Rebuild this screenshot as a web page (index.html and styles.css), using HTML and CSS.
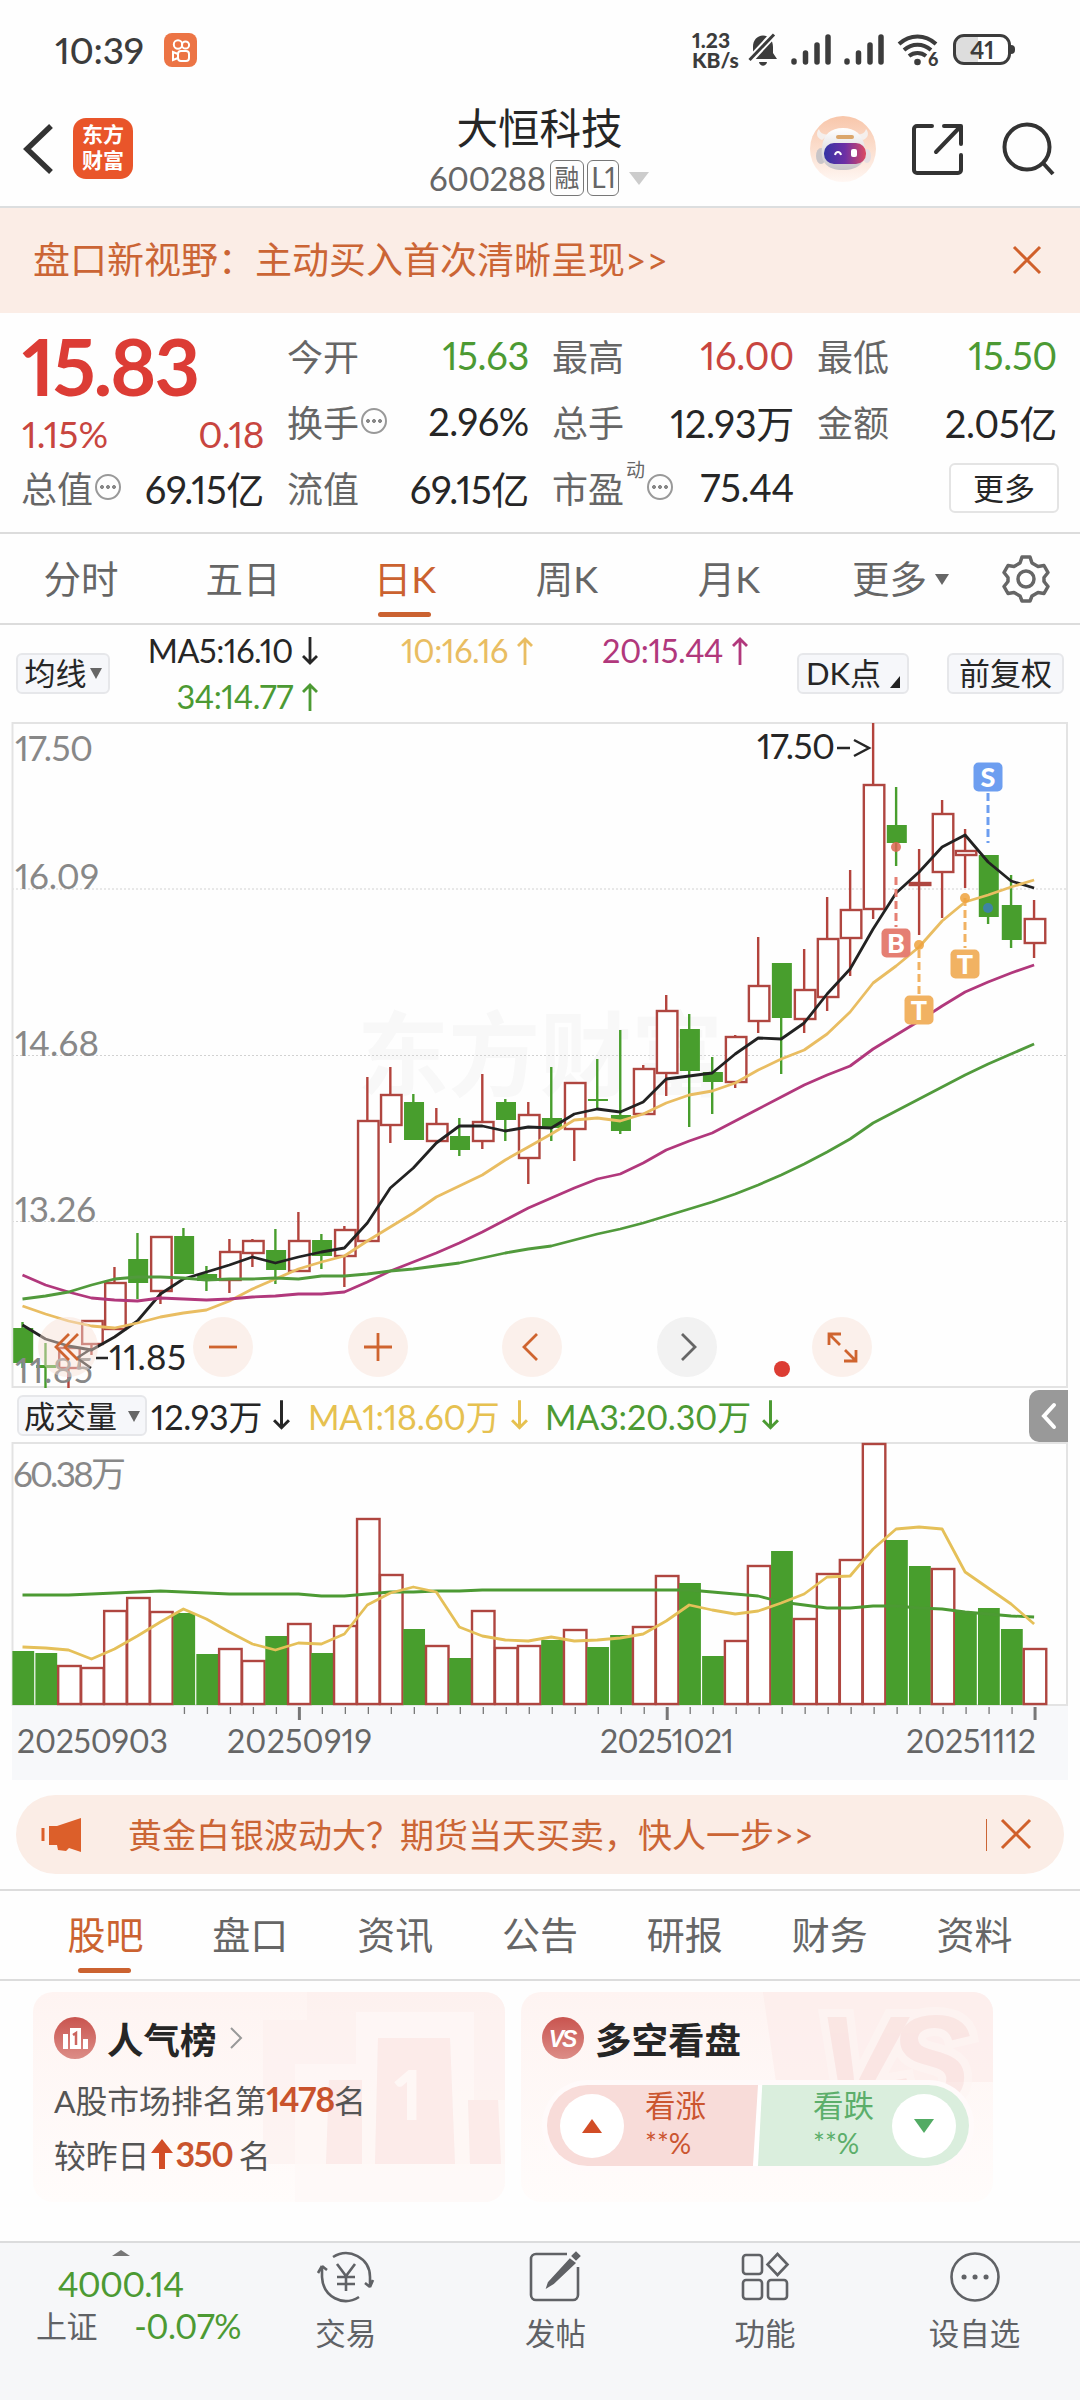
FILE: index.html
```html
<!DOCTYPE html>
<html lang="zh-CN">
<head>
    <meta charset="UTF-8">
    <meta name="viewport" content="width=device-width, initial-scale=1.0">
    <title>大恒科技 600288</title>
    <link rel="stylesheet" href="styles.css">
</head>
<body>
    <div class="status-bar">
        <span class="clock">10:39</span>
        <svg class="app-badge" width="33" height="34" viewBox="0 0 33 34">
            <rect width="33" height="34" rx="8" fill="#ec7445"/>
            <g fill="none" stroke="#fff" stroke-width="2">
                <circle cx="14" cy="11.500" r="4.200"/>
                <circle cx="21.500" cy="12" r="3.600"/>
                <rect x="14" y="18" width="11" height="10" rx="3"/>
                <path d="M14 21l-5-2v8l5-2"/>
            </g>
        </svg>
        <div class="status-right">
            <div class="speed">1.23<br>KB/s</div>
            <svg width="30" height="36" viewBox="0 0 30 36">
                <path d="M5 26V15C5 8 9 4 15 3.500c6 .5 10 4.500 10 11.500v6l4 6H3z" fill="#3c3c3c"/>
                <path d="M11 30h8c-1 5-7 5-8 0z" fill="#3c3c3c"/>
                <path d="M1 29L26 2" stroke="#fff" stroke-width="7"/>
                <path d="M1.500 28L26 2.500" stroke="#3c3c3c" stroke-width="3"/>
            </svg>
            <svg class="signal" width="40" height="36" viewBox="0 0 40 36">
                <path d="M3 29v1M14.500 21v9M26 13v17M37 5v25" stroke="#3c3c3c" stroke-width="5.500" stroke-linecap="round"/>
            </svg>
            <svg class="signal" width="40" height="36" viewBox="0 0 40 36">
                <path d="M3 29v1M14.500 21v9M26 13v17M37 5v25" stroke="#3c3c3c" stroke-width="5.500" stroke-linecap="round"/>
            </svg>
            <svg class="wifi" width="42" height="36" viewBox="0 0 42 36">
                <path d="M2 12c11-10 26-10 37 0M7 18c8-7 19-7 27 0M12 24c5-4 12-4 17 0" fill="none" stroke="#3c3c3c" stroke-width="4"/>
                <circle cx="20.500" cy="30" r="3.300" fill="#3c3c3c"/>
                <text x="31" y="34" class="wifi-gen">6</text>
            </svg>
            <div class="battery"><span>41</span></div>
        </div>
    </div>

    <header class="header">
        <svg class="back" width="30" height="52" viewBox="0 0 30 52">
            <path d="M27 3L3 26l24 23" fill="none" stroke="#333" stroke-width="5.500"/>
        </svg>
        <div class="logo">东方<br>财富</div>
        <div class="stock">
            <div class="stock-name">大恒科技</div>
            <div class="stock-code"><span class="code">600288</span><i>融</i><i class="l1">L1</i><b></b></div>
        </div>
        <div class="header-icons">
            <svg width="66" height="66" viewBox="0 0 66 66">
                <defs>
                    <linearGradient id="avatarBg" x1="0" y1="0" x2="0" y2="1"><stop offset="0" stop-color="#f8c6aa"/><stop offset="1" stop-color="#fff7f3"/></linearGradient>
                    <linearGradient id="visor" x1="0" y1="0" x2="1" y2="0"><stop offset="0" stop-color="#3434a4"/><stop offset=".5" stop-color="#6d2fa5"/><stop offset="1" stop-color="#dc4a62"/></linearGradient>
                    <linearGradient id="helmet" x1="0" y1="0" x2="0" y2="1"><stop offset="0" stop-color="#fff"/><stop offset="1" stop-color="#c8c4c8"/></linearGradient>
                </defs>
                <circle cx="33" cy="33" r="33" fill="url(#avatarBg)"/>
                <path d="M12 24C6 22 6 16 9 13c1 4 4 5 9 6zM53 24c6-2 6-8 3-11-1 4-4 5-9 6z" fill="#f5efec"/>
                <ellipse cx="11" cy="40" rx="5" ry="8" fill="#c9c5c8"/>
                <ellipse cx="57" cy="40" rx="4" ry="7" fill="#e5dee2"/>
                <path d="M12 32C13 18 21 12 33 12s20 6 22 20c2 14-6 22-22 22S10 46 12 32z" fill="url(#helmet)"/>
                <rect x="26" y="19" width="18" height="4" rx="2" fill="#dba66b"/>
                <rect x="14" y="27" width="42" height="21" rx="10" fill="url(#visor)"/>
                <path d="M25 39c1-4 5-4 6 0" fill="none" stroke="#fff" stroke-width="2"/>
                <rect x="41" y="33" width="6" height="8" rx="2" fill="#fff"/>
            </svg>
            <svg class="share" width="52" height="52" viewBox="0 0 52 52">
                <path d="M20 3H5a3 3 0 0 0-3 3v41a3 3 0 0 0 3 3h41a3 3 0 0 0 3-3V32M32 3h17v18M48 4L24 29" fill="none" stroke="#333" stroke-width="4" stroke-linecap="round" stroke-linejoin="round"/>
            </svg>
            <svg class="search" width="54" height="54" viewBox="0 0 54 54">
                <circle cx="25" cy="25" r="22.500" fill="none" stroke="#333" stroke-width="4"/>
                <path d="M41 41l10 11" stroke="#333" stroke-width="4"/>
            </svg>
        </div>
    </header>

    <div class="banner">
        <span>盘口新视野：主动买入首次清晰呈现&gt;&gt;</span>
        <svg width="28" height="28" viewBox="0 0 28 28"><path d="M1 1l26 26M27 1L1 27" stroke="#d0602b" stroke-width="3"/></svg>
    </div>

    <section class="quote">
        <div class="quote-main">
            <div class="price">15.83</div>
            <div class="change"><span>1.15%</span><span>0.18</span></div>
            <div class="item"><label>总值</label><em></em><span>69.15亿</span></div>
        </div>
        <div class="quote-grid">
            <div class="item"><label>今开</label><span class="green">15.63</span></div>
            <div class="item"><label>最高</label><span class="red">16.00</span></div>
            <div class="item"><label>最低</label><span class="green">15.50</span></div>
            <div class="item"><label>换手</label><em></em><span>2.96%</span></div>
            <div class="item"><label>总手</label><span>12.93万</span></div>
            <div class="item"><label>金额</label><span>2.05亿</span></div>
            <div class="item"><label>流值</label><span>69.15亿</span></div>
            <div class="item"><label>市盈<sup>动</sup></label><em></em><span>75.44</span></div>
            <div class="item"><button class="more">更多</button></div>
        </div>
    </section>

    <nav class="period">
        <a>分时</a>
        <a>五日</a>
        <a class="active">日K</a>
        <a>周K</a>
        <a>月K</a>
        <a class="drop">更多<b></b></a>
        <svg width="48" height="48" viewBox="0 0 48 48" fill="none" stroke="#666" stroke-width="3.500" stroke-linejoin="round">
            <path d="M20 2h8l2 6 6 3.500 6-1 4 7-4 5v4l4 5-4 7-6-1-6 3.500-2 5h-8l-2-5-6-3.500-6 1-4-7 4-5v-4l-4-5 4-7 6 1L18 8z"/>
            <circle cx="24" cy="24" r="8"/>
        </svg>
    </nav>

    <section class="legend">
        <button class="chip">均线<b></b></button>
        <div class="ma-list">
            <span>MA5:16.10<svg class="arr" viewBox="0 0 16 28"><path d="M8 0v26M1 19l7 7 7-7"/></svg></span>
            <span class="ma10">10:16.16<svg class="arr" viewBox="0 0 16 28"><path d="M8 28V2M1 9l7-7 7 7"/></svg></span>
            <span class="ma20">20:15.44<svg class="arr" viewBox="0 0 16 28"><path d="M8 28V2M1 9l7-7 7 7"/></svg></span>
            <span class="ma34">34:14.77<svg class="arr" viewBox="0 0 16 28"><path d="M8 28V2M1 9l7-7 7 7"/></svg></span>
        </div>
        <button class="chip dk">DK点<b></b></button>
        <button class="chip fq">前复权</button>
    </section>

    <section class="chart">
        <svg id="priceChart" width="1080" height="666" viewBox="0 0 1080 666"></svg>
        <div class="tools">
            <i><svg viewBox="0 0 60 60"><path d="M31 17L18 30l13 13M40 17L27 30l13 13"/></svg></i>
            <i><svg viewBox="0 0 60 60"><path d="M16 30h28"/></svg></i>
            <i><svg viewBox="0 0 60 60"><path d="M16 30h28M30 16v28"/></svg></i>
            <i><svg viewBox="0 0 60 60"><path d="M35 17L22 30l13 13"/></svg></i>
            <i class="off"><svg viewBox="0 0 60 60"><path d="M25 17l13 13-13 13"/></svg></i>
            <i><svg viewBox="0 0 60 60"><path d="M17 28V17h12M17 17l11 11M33 33l11 11M32 44h12V33"/></svg></i>
        </div>
        <span class="red-dot"></span>
    </section>

    <section class="vol-head">
        <button class="chip">成交量<b></b></button>
        <span class="v0">12.93万<svg class="arr" viewBox="0 0 16 28"><path d="M8 0v26M1 19l7 7 7-7"/></svg></span>
        <span class="v1">MA1:18.60万<svg class="arr" viewBox="0 0 16 28"><path d="M8 0v26M1 19l7 7 7-7"/></svg></span>
        <span class="v3">MA3:20.30万<svg class="arr" viewBox="0 0 16 28"><path d="M8 0v26M1 19l7 7 7-7"/></svg></span>
        <div class="fold"><svg width="16" height="26" viewBox="0 0 16 26"><path d="M13 2L3 13l10 11" fill="none" stroke="#fff" stroke-width="4" stroke-linecap="round"/></svg></div>
    </section>
    <svg id="volumeChart" class="volume" width="1080" height="340" viewBox="0 0 1080 340"></svg>

    <div class="promo">
        <svg width="42" height="36" viewBox="0 0 42 36">
            <path d="M2 11v13" stroke="#dc5f2a" stroke-width="3"/>
            <path d="M8 9h8L40 1v34l-12-4-3 3-8-1-1-5H8z" fill="#dc5f2a"/>
        </svg>
        <span>黄金白银波动大？期货当天买卖，快人一步&gt;&gt;</span>
        <div class="promo-close"><svg width="30" height="30" viewBox="0 0 30 30"><path d="M1 1l28 28M29 1L1 29" stroke="#d0602b" stroke-width="3"/></svg></div>
    </div>

    <nav class="sections">
        <a class="active">股吧</a>
        <a>盘口</a>
        <a>资讯</a>
        <a>公告</a>
        <a>研报</a>
        <a>财务</a>
        <a>资料</a>
    </nav>

    <div class="cards">
        <div class="card">
            <svg class="card-bg" width="472" height="210" viewBox="0 0 472 210">
                <path d="M230 28h44V0h198v172H230z" fill="#fceeec" opacity=".55"/>
                <path d="M262 72h61V20h118v88h31v102H262z" fill="#fef8f6" opacity=".7"/>
                <path d="M296 88h33v84h-36zM345 46h72l5 126h-80zM435 108h30l3 64h-31z" fill="#f9dfdd" opacity=".5"/>
                <text x="361" y="128" class="bg-one">1</text>
            </svg>
            <h3>
                <svg width="42" height="42" viewBox="0 0 42 42">
                    <defs><linearGradient id="badge" x1="0" y1="0" x2="0" y2="1"><stop offset="0" stop-color="#c9544f"/><stop offset="1" stop-color="#dc8d87"/></linearGradient></defs>
                    <circle cx="21" cy="21" r="21" fill="url(#badge)"/>
                    <path d="M9 17h5v15H9zM16 11h11v21H16zM29 22h5v10h-5z" fill="#fff"/>
                    <path d="M19 18l3-2v12" fill="none" stroke="#cc655f" stroke-width="2.500"/>
                </svg>
                人气榜
                <svg class="go" width="14" height="22" viewBox="0 0 14 22"><path d="M2 1l10 10L2 21" fill="none" stroke="#999" stroke-width="2"/></svg>
            </h3>
            <p>A股市场排名第<strong>1478</strong>名</p>
            <p>较昨日<svg class="up" width="22" height="30" viewBox="0 0 22 30"><path d="M11 0l11 14H14v16H8V14H0z" fill="#d24d26"/></svg><strong>350</strong><span class="ming">名</span></p>
        </div>
        <div class="card">
            <svg class="card-bg" width="472" height="210" viewBox="0 0 472 210">
                <path d="M242 0h230v90H255z" fill="#fcebea" opacity=".6"/>
                <text x="296" y="112" class="bg-vs">VS</text>
            </svg>
            <h3>
                <svg width="42" height="42" viewBox="0 0 42 42">
                    <circle cx="21" cy="21" r="21" fill="url(#badge)"/>
                    <text x="20" y="30" class="vs">VS</text>
                </svg>
                多空看盘
            </h3>
            <div class="vote">
                <div class="bull">
                    <i><svg width="22" height="16" viewBox="0 0 22 16"><path d="M11 1l10 14H1z" fill="#d24d26"/></svg></i>
                    <div>看涨<small>**%</small></div>
                </div>
                <div class="bear">
                    <div>看跌<small>**%</small></div>
                    <i><svg width="22" height="16" viewBox="0 0 22 16"><path d="M11 15L1 1h20z" fill="#52ab64"/></svg></i>
                </div>
            </div>
        </div>
    </div>

    <footer class="tabbar">
        <div class="index">
            <b></b>
            <div class="point">4000.14</div>
            <div class="index-row"><span>上证</span><span class="rate">-0.07%</span></div>
        </div>
        <div class="tab">
            <svg viewBox="0 0 56 52">
                <path d="M15 6C31-4 52 7 52 26v10M52 36l3-7M52 36l-5-4M41 46C25 56 5 46 4 26V15M4 15l-4 7M4 15l5 4"/>
                <path d="M19 13l9 12 9-12M28 25v15M19 26h18M19 33h18"/>
            </svg>
            交易
        </div>
        <div class="tab">
            <svg viewBox="0 0 56 52">
                <path d="M40 3H9a5 5 0 0 0-5 5v36a5 5 0 0 0 5 5h37a5 5 0 0 0 5-5V16"/>
                <path d="M22 32L43 9l4 3-21 20-5 3zM46 5l3-3 3 3-3 3z" fill="#606266"/>
            </svg>
            发帖
        </div>
        <div class="tab">
            <svg viewBox="0 0 56 52">
                <rect x="6" y="4" width="19" height="19" rx="3"/>
                <rect x="6" y="29" width="19" height="19" rx="3"/>
                <rect x="31" y="29" width="19" height="19" rx="3"/>
                <path d="M40.500 3l10 10.500-10 10.500-10-10.500z"/>
            </svg>
            功能
        </div>
        <div class="tab">
            <svg viewBox="0 0 56 52">
                <circle cx="28" cy="26" r="23.500"/>
                <path d="M17 26h.1M28 26h.1M39 26h.1" stroke-width="5" stroke-linecap="round"/>
            </svg>
            设自选
        </div>
    </footer>

    <script src="script.js"></script>
</body>
</html>
```
FILE: styles.css
```css
* {
    box-sizing: border-box;
}

body {
    margin: 0;
    width: 1080px;
    height: 2400px;
    overflow: hidden;
    background: #fefefe;
    color: #262626;
    font-family: Lato, "Noto Sans CJK SC", sans-serif;
    font-feature-settings: "pnum";
    display: flex;
    flex-direction: column;
}

svg {
    display: block;
    flex: none;
    overflow: visible;
}

i, em {
    font-style: normal;
}

button {
    font: inherit;
    color: inherit;
    padding: 0;
}

.green { color: #4c9a33; }
.red { color: #c8453f; }

/* status bar */
.status-bar {
    height: 85px;
    padding: 14px 69px 0 55px;
    display: flex;
    align-items: center;
    color: #3c3c3c;
}

.clock {
    width: 109px;
    font-size: 37px;
    letter-spacing: -0.3px;
    font-weight: 500;
    line-height: 70px;
}

.status-right {
    margin-left: auto;
    display: flex;
    align-items: center;
}

.speed {
    width: 56px;
    font-size: 21px;
    line-height: 19.500px;
    font-weight: 900;
}

.signal { margin-left: 13px; }
.wifi { margin-left: 13px; }

.wifi-gen {
    font-size: 18px;
    font-weight: 900;
    fill: #3c3c3c;
    stroke: #fff;
    stroke-width: 3px;
    paint-order: stroke;
}

.battery {
    position: relative;
    width: 58px;
    height: 31px;
    margin-left: 14px;
    border: 3px solid #3c3c3c;
    border-radius: 11px;
    font-size: 24px;
    font-weight: 700;
    line-height: 25px;
    text-align: center;
    background: linear-gradient(90deg, #ddd 42%, #fff 42%);
}

.battery::after {
    content: "";
    position: absolute;
    right: -7px;
    top: 8px;
    width: 4px;
    height: 9px;
    border-radius: 0 4px 4px 0;
    background: #3c3c3c;
}

/* header */
.header {
    height: 123px;
    padding-left: 24px;
    display: flex;
    align-items: center;
    border-bottom: 2px solid #dcdedf;
}

.back { margin-top: 6px; }

.logo {
    width: 60px;
    height: 61px;
    margin: 6px 0 0 19px;
    padding-top: 3px;
    border-radius: 13px;
    background: #e9552a;
    color: #fff;
    font-size: 21px;
    font-weight: 700;
    line-height: 26px;
    text-align: center;
}

.stock {
    width: 300px;
    margin-left: 257px;
    padding-top: 13px;
}

.stock-name {
    margin-left: -1px;
    font-size: 41.500px;
    line-height: 52px;
    text-align: center;
}

.stock-code {
    height: 48px;
    padding-left: 39px;
    display: flex;
    align-items: center;
    font-size: 33px;
    color: #666;
}

.code {
    width: 121px;
    letter-spacing: -0.5px;
}

.stock-code i {
    width: 34px;
    height: 36px;
    margin-right: 3px;
    border: 1.500px solid #777;
    border-radius: 6px;
    font-size: 25px;
    line-height: 32px;
    text-align: center;
}

.stock-code .l1 {
    width: 32px;
    font-size: 28px;
    letter-spacing: -1px;
}

.stock-code b {
    margin-left: 7px;
    border: 10px solid transparent;
    border-top: 13px solid #ccc;
    border-bottom: 0;
}

.header-icons {
    margin-left: auto;
    padding: 6px 24px 0 0;
    display: flex;
    align-items: center;
}

.share { margin-left: 36px; }
.search { margin-left: 38px; }

.banner {
    height: 105px;
    padding: 0 39px 0 33px;
    display: flex;
    align-items: center;
    justify-content: space-between;
    background: #fbede6;
    color: #cb6535;
    font-size: 37px;
}

.banner span { margin-top: -5px; }
.banner svg { margin-top: -1px; }

/* quote */
.quote {
    height: 221px;
    padding: 9px 22px 0;
    display: flex;
    gap: 24px;
    border-bottom: 2px solid #dcdcdc;
}

.quote-main { width: 242px; }

.price {
    height: 90px;
    font-size: 79px;
    font-weight: 700;
    line-height: 88px;
    letter-spacing: -2.200px;
    color: #dc3c35;
}

.change {
    height: 42px;
    display: flex;
    justify-content: space-between;
    font-size: 37px;
    line-height: 44px;
    color: #c8453f;
}

.change span + span { letter-spacing: -0.4px; }

.quote-grid {
    flex: 1;
    display: grid;
    grid-template-columns: 241px 241px 239px;
    column-gap: 24px;
    grid-template-rows: 66px 66px 66px;
}

.item {
    height: 66px;
    display: flex;
    align-items: center;
    font-size: 38px;
    letter-spacing: -0.3px;
}

.item label {
    position: relative;
    margin-left: -1px;
    font-size: 36px;
    letter-spacing: 0;
    color: #666;
}

.item sup {
    position: absolute;
    left: 74px;
    top: -3px;
    font-size: 19px;
    line-height: 24px;
}

.item span { margin-left: auto; }

.item em {
    width: 26px;
    height: 26px;
    margin-left: 2px;
    border: 2px solid #999;
    border-radius: 50%;
    background: radial-gradient(circle, #888 1.700px, transparent 2.200px) center / 6px 6px no-repeat,
        radial-gradient(circle, #888 1.700px, transparent 2.200px) 2px 8px / 6px 6px no-repeat,
        radial-gradient(circle, #888 1.700px, transparent 2.200px) 14px 8px / 6px 6px no-repeat;
}

.item label:has(sup) + em { margin-left: 23px; }

.more {
    width: 110px;
    height: 50px;
    margin: 2px -2px 0 auto;
    border: 2px solid #e4e4e4;
    border-radius: 6px;
    background: #fff;
    font-size: 31px;
    line-height: 43px;
    letter-spacing: 0;
}

/* k-line period tabs */
.period {
    height: 91px;
    display: flex;
    align-items: center;
    border-bottom: 2px solid #dcdcdc;
    font-size: 37.500px;
    color: #666;
}

.period a {
    width: 162px;
    line-height: 89px;
    text-align: center;
}

.period .drop {
    width: 192px;
    padding-left: 42px;
    text-align: left;
}

.period b {
    display: inline-block;
    margin: 0 0 8px 8px;
    border: 7px solid transparent;
    border-top: 11px solid #666;
    border-bottom: 0;
}

.active {
    position: relative;
    color: #cb6230;
}

.active::after {
    content: "";
    position: absolute;
    left: 50%;
    bottom: 6px;
    width: 53px;
    height: 5px;
    margin-left: -27px;
    border-radius: 3px;
    background: #cb6230;
}

/* MA legend */
.legend {
    height: 97px;
    padding: 0 16px;
    display: flex;
    align-items: center;
}

.chip {
    height: 41px;
    border: 2px solid #e6e7ea;
    border-radius: 6px;
    background: #f6f7fa;
    width: 94px;
    font-size: 31px;
    line-height: 34px;
    white-space: nowrap;
}

.chip b {
    display: inline-block;
    margin: 0 0 6px 3px;
    border: 6px solid transparent;
    border-top: 11px solid #666;
    border-bottom: 0;
}

.legend .chip { margin-top: -1px; }

.ma-list {
    width: 645px;
    margin-left: -7px;
    padding-top: 1px;
    display: grid;
    grid-template-columns: 215px 215px 215px;
    grid-auto-rows: 46px;
    font-size: 32.500px;
    line-height: 46px;
    letter-spacing: -0.5px;
}

.ma-list span {
    display: flex;
    align-items: center;
    justify-content: flex-end;
}

.arr {
    width: 16px;
    height: 28px;
    margin-left: 9px;
    fill: none;
    stroke: currentColor;
    stroke-width: 2.800;
}

.ma10 { color: #e9bd62; }
.ma20 { color: #b1387c; }
.ma34 { color: #4c9a33; }

.legend .dk {
    width: 112px;
    margin-left: 49px;
}

.dk b {
    margin: 0 0 -3px 9px;
    border: 5px solid;
    border-color: transparent #222 #222 transparent;
    border-width: 6px 5px;
}

.legend .fq {
    width: 117px;
    margin-left: 38px;
}

/* charts */
.chart {
    height: 666px;
    position: relative;
}

.tools {
    position: absolute;
    left: 38px;
    top: 595px;
    display: flex;
    gap: 94.800px;
}

.tools i {
    width: 60px;
    height: 60px;
    border-radius: 50%;
    background: rgba(248, 225, 212, 0.45);
}

.tools .off { background: #f2f2f2; }
.tools .off svg { stroke: #666; }

.tools svg {
    fill: none;
    stroke: #cf642f;
    stroke-width: 2.800;
}

.red-dot {
    position: absolute;
    left: 774px;
    top: 639px;
    width: 16px;
    height: 16px;
    border-radius: 50%;
    background: #dc3c33;
}

.frame {
    fill: none;
    stroke: #e3e3e3;
    stroke-width: 2;
}

.grid {
    stroke: #d2d2d2;
    stroke-width: 1;
    stroke-dasharray: 2 2;
}

.axis-text { font-size: 35px; fill: #888; }
.note { font-size: 35px; fill: #262626; }
.date { font-size: 32px; fill: #666; }
.watermark { font-size: 92px; font-weight: 700; fill: #f8f8f8; }
.tag-text { font-size: 27px; font-weight: 900; fill: #fff; text-anchor: middle; }

.up-bar { fill: #fff; stroke: #af4640; stroke-width: 2.400; }
.down-bar { fill: #489e2d; }
.up-wick { stroke: #b3433c; stroke-width: 2.400; }
.down-wick { stroke: #489e2d; stroke-width: 2.400; }
.line { fill: none; stroke-width: 2.800; stroke-linejoin: round; }

.vol-head {
    height: 54px;
    padding-left: 17px;
    display: flex;
    align-items: center;
    font-size: 34px;
    letter-spacing: -0.2px;
}

.vol-head .chip {
    width: 130px;
    letter-spacing: 0;
    margin-top: 1px;
}

.vol-head .chip b { margin-left: 11px; }

.vol-head span {
    display: flex;
    align-items: center;
    white-space: nowrap;
}

.v0 { width: 157px; padding-left: 4px; }
.v1 { width: 241px; padding-left: 4px; color: #e6c150; }
.v3 { color: #4c9a33; }
.vol-head .arr { width: 17px; height: 30px; margin-left: 11px; }

.fold {
    width: 39px;
    height: 52px;
    margin: 2px 12px 0 auto;
    border-radius: 10px 0 0 10px;
    background: #999;
    display: flex;
    align-items: center;
    justify-content: center;
}

/* promo */
.promo {
    height: 79px;
    margin: 13px 16px 15px;
    padding: 0 33px 0 25px;
    display: flex;
    align-items: center;
    border-radius: 40px;
    background: #fbede6;
    color: #cb6535;
    font-size: 34px;
}

.promo span { margin: -3px 0 0 45px; }

.promo-close {
    height: 32px;
    margin-left: auto;
    padding-left: 14px;
    border-left: 1px solid #cb6535;
}

.sections {
    height: 92px;
    padding: 0 33px;
    display: flex;
    border-top: 2px solid #dcdcdc;
    border-bottom: 2px solid #dcdcdc;
    font-size: 38px;
    line-height: 86px;
    color: #666;
}

.sections a {
    flex: 1;
    text-align: center;
}

/* cards */
.cards {
    padding: 11px 33px 0;
    display: flex;
    gap: 16px;
    height: 260px;
}

.card {
    position: relative;
    width: 472px;
    height: 210px;
    padding: 20px 21px;
    border-radius: 20px;
    overflow: hidden;
    background: linear-gradient(#fef4f2, #fffcfb);
}

.card > :not(.card-bg) { position: relative; }

.card-bg {
    position: absolute;
    left: 0;
    top: 0;
}

.bg-one { font-size: 68px; font-weight: 900; fill: #fef7f5; }
.bg-vs { font: italic 900 126px "Liberation Sans", sans-serif; fill: #f9dfdd; stroke: #fef6f4; stroke-width: 16px; paint-order: stroke; opacity: 0.6; letter-spacing: -14px; }
.vs { font: italic 700 23px "Liberation Sans", sans-serif; fill: #fff; text-anchor: middle; letter-spacing: -2px; }

.card h3 {
    height: 52px;
    margin: 0;
    display: flex;
    align-items: center;
    gap: 11px;
    font-size: 36.500px;
    font-weight: 700;
}

.go { margin-left: 1px; }

.card p {
    height: 55px;
    margin: 0;
    display: flex;
    align-items: center;
    font-size: 31.800px;
    color: #555;
}

.card h3 + p { margin-top: 7px; }

.card strong {
    font-size: 34px;
    color: #c9532c;
    letter-spacing: -1.200px;
}

.up { margin: 0 2px; }
.ming { margin-left: 6px; }

.vote {
    width: 422px;
    height: 81px;
    margin: 21px 0 0 5px;
    display: flex;
    border-radius: 41px;
    overflow: hidden;
    background: #fff;
    box-shadow: 0 0 0 5px #fffafa;
    font-size: 30.500px;
    line-height: 38px;
}

.vote > div {
    display: flex;
    align-items: center;
}

.vote > div > div { margin-top: -4px; }

.vote i {
    width: 64px;
    height: 64px;
    border-radius: 50%;
    background: #fff;
    display: flex;
    align-items: center;
    justify-content: center;
}

.vote small {
    display: block;
    font-size: 28px;
    line-height: 38px;
}

.bull {
    width: 211px;
    padding-left: 13px;
    gap: 21px;
    background: #f8dcd9;
    color: #cb5530;
    clip-path: polygon(0 0, 100% 0, 97.600% 100%, 0 100%);
}

.bear {
    width: 211px;
    padding-right: 13px;
    justify-content: flex-end;
    gap: 18px;
    background: #daeedd;
    color: #5cae6b;
    clip-path: polygon(2% 0, 100% 0, 100% 100%, 0 100%);
}

/* bottom bar */
.tabbar {
    flex: 1;
    display: flex;
    background: #f6f7f9;
    border-top: 2px solid #dbdcdd;
}

.index {
    width: 241px;
    padding-top: 7px;
    color: #4c9a33;
}

.index b {
    display: block;
    width: 0;
    margin-left: 112px;
    border: 9px solid transparent;
    border-bottom: 6px solid #777;
    border-top: 0;
}

.point {
    padding-top: 6px;
    font-size: 35px;
    line-height: 42px;
    letter-spacing: -0.8px;
    text-align: center;
}

.index-row {
    display: flex;
    justify-content: space-between;
    padding: 1px 0 0 36px;
    font-size: 34px;
    line-height: 42px;
    letter-spacing: -0.5px;
}

.index-row span:first-child {
    font-size: 31px;
    color: #606266;
}

.tab {
    width: 209.600px;
    padding-top: 8px;
    display: flex;
    flex-direction: column;
    align-items: center;
    font-size: 30.500px;
    line-height: 60px;
    color: #606266;
}

.tab svg {
    width: 56px;
    height: 52px;
    fill: none;
    stroke: #606266;
    stroke-width: 2.600;
}
```
FILE: script.js
```js
// [high, top, bottom, low] of every candle, in chart pixels
const candles = [
    [600, 606, 641, 646], [621, 643, 646, 666], [625, 626, 646, 666], [598, 599, 622, 633], [545, 561, 607, 607],
    [511, 537, 561, 577], [515, 515, 569, 582], [506, 514, 552, 552], [544, 552, 559, 569], [517, 530, 558, 571],
    [517, 519, 531, 545], [507, 528, 548, 562], [490, 519, 549, 549], [512, 518, 534, 547], [504, 508, 534, 565],
    [355, 399, 519, 519], [345, 373, 403, 421], [372, 380, 418, 418], [386, 402, 419, 419], [396, 414, 428, 434],
    [352, 400, 419, 427], [377, 380, 398, 419], [380, 393, 436, 462], [345, 396, 406, 419], [361, 361, 407, 439],
    [337, 377, 379, 388], [308, 393, 409, 412], [343, 347, 392, 392], [273, 289, 351, 374], [292, 307, 349, 405],
    [335, 350, 360, 392], [313, 315, 360, 366], [215, 264, 299, 311], [241, 241, 296, 352], [227, 268, 297, 311],
    [175, 217, 275, 289], [148, 188, 216, 254], [1, 63, 187, 197], [65, 103, 121, 144], [127, 161, 163, 213],
    [78, 92, 150, 196], [107, 129, 133, 166], [133, 133, 195, 202], [153, 183, 218, 226], [178, 197, 221, 236]
];
const candleColors = 'ggrrrgrggrrgrgrrrgrgrgrgrggrrggrrgrrrrgrrrggr';

const volumes = [
    208, 210, 223, 225, 168, 155, 169, 170, 211, 206, 218, 193, 181, 210, 183, 76, 132, 186, 203, 215, 168, 205, 203,
    197, 187, 204, 192, 184, 133, 140, 213, 198, 123, 108, 176, 131, 117, 1, 97, 123, 126, 169, 165, 186, 206
];
const volumeColors = 'ggrrrrrggrrgrgrrrgrgrrrgrggrrggrrgrrrrggrgggr';

const ma = {
    '#222': [603, 617, 624, 628, 615, 599, 572, 557, 550, 543, 535, 541, 535, 530, 526, 501, 466, 446, 421, 404, 404, 409, 405,
        406, 392, 387, 390, 380, 357, 354, 351, 332, 316, 317, 301, 272, 247, 207, 171, 150, 125, 113, 140, 159, 166],
    '#e9bd62': [584, 592, 599, 604, 606, 601, 595, 591, 588, 579, 567, 557, 547, 540, 534, 519, 505, 491, 475, 464, 453, 438, 425,
        412, 398, 396, 399, 392, 381, 373, 369, 361, 348, 337, 328, 312, 290, 261, 244, 225, 199, 180, 173, 165, 158],
    '#b1387c': [553, 563, 570, 576, 578, 579, 576, 577, 578, 577, 575, 574, 572, 572, 570, 560, 549, 540, 531, 521, 510, 498, 486,
        476, 466, 457, 452, 441, 428, 419, 411, 399, 387, 375, 363, 353, 344, 327, 313, 299, 284, 270, 260, 251, 243],
    '#519a3c': [577, 574, 570, 563, 557, 555, 555, 556, 558, 557, 557, 556, 557, 554, 554, 552, 549, 547, 544, 541, 536, 531, 527,
        524, 518, 512, 507, 501, 494, 487, 480, 472, 463, 453, 442, 430, 417, 401, 389, 377, 365, 353, 342, 332, 322]
};

const volumeMa = {
    '#4c9a33': [152, 152, 152, 151, 150, 149, 148, 149, 150, 151, 151, 151, 151, 153, 153, 151, 149, 149, 148, 148, 147, 147, 147,
        147, 147, 147, 147, 147, 147, 147, 149, 151, 153, 159, 162, 165, 165, 163, 163, 165, 166, 169, 171, 173, 174],
    '#e5c059': [204, 205, 207, 216, 206, 193, 179, 166, 176, 189, 201, 207, 200, 201, 191, 162, 150, 144, 149, 184, 193, 197, 198,
        194, 198, 197, 195, 191, 178, 162, 167, 171, 168, 160, 151, 134, 133, 106, 86, 84, 86, 129, 145, 161, 181]
};

const x = i => 22.5 + 22.99 * i;

function text(cls, tx, ty, width, value) {
    return `<text class="${cls}" x="${tx}" y="${ty}" textLength="${width}">${value}</text>`;
}

function lines(set) {
    return Object.entries(set).map(([color, ys]) =>
        `<polyline class="line" stroke="${color}" points="${ys.map((y, i) => x(i).toFixed(1) + ',' + y).join(' ')}"/>`
    ).join('');
}

// B / S / T trade marks: dashed leader, dot on the price, square letter
function tag(letter, cx, cy, color, y1, y2, dotY, dotColor) {
    return `<path d="M${cx} ${y1}V${y2}" stroke="${color}" stroke-width="3" stroke-dasharray="8 4"/>
        <circle cx="${cx}" cy="${dotY}" r="5" fill="${dotColor}" opacity=".85"/>
        <rect x="${cx - 14.5}" y="${cy - 14.5}" width="29" height="29" rx="5" fill="${color}"/>
        <text class="tag-text" x="${cx}" y="${cy + 10}">${letter}</text>`;
}

function drawPrice() {
    let out = text('watermark', 357, 367, 366, '东方财富');
    [167, 333.5, 499.5].forEach(y => out += `<path class="grid" d="M12 ${y}H1067"/>`);
    out += '<rect class="frame" x="12.5" y="1" width="1054.500" height="664"/>';

    candles.forEach(([high, top, bottom, low], i) => {
        const cx = x(i);
        if (candleColors[i] === 'r') {
            out += `<path class="up-wick" d="M${cx} ${high}V${top}M${cx} ${bottom}V${low}"/>
                <rect class="up-bar" x="${cx - 9.3}" y="${top}" width="20.500" height="${bottom - top}"/>`;
        } else {
            out += `<path class="down-wick" d="M${cx} ${high}V${low}"/>
                <rect class="down-bar" x="${cx - 9.3}" y="${top}" width="20" height="${bottom - top}"/>`;
        }
    });

    out += lines(ma);
    out += tag('S', 988, 55, '#6d9ef0', 71, 121, 186, '#3d7fb8');
    out += tag('B', 896, 221, '#e57f73', 155, 205, 125, '#dc6450');
    out += tag('T', 919, 288, '#f1b262', 228, 273, 223, '#efa23d');
    out += tag('T', 965, 242, '#f1b262', 176, 226, 176, '#efa23d');

    out += text('axis-text', 15, 38.5, 78, '17.50');
    out += text('axis-text', 15, 166.5, 84, '16.09');
    out += text('axis-text', 15, 333.5, 84, '14.68');
    out += text('axis-text', 15, 499.5, 81, '13.26');
    out += text('axis-text', 15, 661, 78, '11.85');
    out += text('note', 757, 37, 78, '17.50') + '<path d="M837 26h13M854 18l15 8-15 8" fill="none" stroke="#262626" stroke-width="2.500"/>';
    out += text('note', 109, 648, 77, '11.85') + '<path d="M96 636h12M91 627l-14 9 14 10" fill="none" stroke="#262626" stroke-width="2.500"/>';
    document.getElementById('priceChart').innerHTML = out;
}

function drawVolume() {
    let out = '<rect x="12" y="264" width="1056" height="74" fill="#f7f8fa"/><rect class="frame" x="12.5" y="1" width="1054.500" height="262"/>';
    out += text('axis-text', 13, 45, 113, '60.38万');
    out += '<g transform="translate(0 1)">';
    volumes.forEach((y, i) => {
        const cx = x(i) + 0.7;
        if (volumeColors[i] === 'r') {
            out += `<rect class="up-bar" x="${cx - 11}" y="${y}" width="22.500" height="${261 - y}"/>`;
        } else {
            out += `<rect class="down-bar" x="${cx - 10.8}" y="${y}" width="21.800" height="${262 - y}"/>`;
        }
    });
    out += lines(volumeMa) + '</g>';

    for (let i = 7; i < 45; i++) {
        const major = i % 16 === 12;
        out += `<path d="M${x(i) + 1} 265v${major ? 13 : 7}" stroke="#777" stroke-width="${major ? 3 : 1.3}"/>`;
    }
    out += text('date', 17, 311, 151, '20250903');
    out += text('date', 227, 311, 145, '20250919');
    out += text('date', 600, 311, 134, '20251021');
    out += text('date', 906, 311, 130, '20251112');
    document.getElementById('volumeChart').innerHTML = out;
}

drawPrice();
drawVolume();
```
